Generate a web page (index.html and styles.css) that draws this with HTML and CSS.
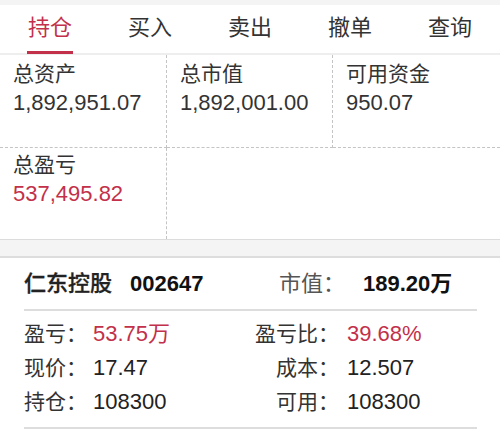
FILE: index.html
```html
<!DOCTYPE html>
<html lang="zh-CN">
<head>
<meta charset="utf-8">
<title>持仓</title>
<link rel="stylesheet" href="styles.css">
</head>
<body>
<div class="topstrip"></div>
<nav class="tabs">
  <div class="tab active">持仓</div>
  <div class="tab">买入</div>
  <div class="tab">卖出</div>
  <div class="tab">撤单</div>
  <div class="tab">查询</div>
</nav>
<section class="summary">
  <div class="cell col1 row1"><div class="label">总资产</div><div class="value">1,892,951.07</div></div>
  <div class="cell col2 row1"><div class="label">总市值</div><div class="value">1,892,001.00</div></div>
  <div class="cell col3 row1"><div class="label">可用资金</div><div class="value">950.07</div></div>
  <div class="cell col1 row2"><div class="label">总盈亏</div><div class="value red">537,495.82</div></div>
  <div class="cell row2 empty"></div>
  <div class="cell row2 empty"></div>
</section>
<div class="band"></div>
<section class="card">
  <div class="card-head">
    <div class="name"><span class="cn">仁东控股</span><span class="code">002647</span></div>
    <div class="mv"><span class="mv-label">市值：</span><span class="mv-value">189.20万</span></div>
  </div>
  <div class="rows">
    <div class="item"><span class="k">盈亏：</span><span class="v red">53.75万</span></div>
    <div class="item right"><span class="k">盈亏比：</span><span class="v red">39.68%</span></div>
    <div class="item"><span class="k">现价：</span><span class="v">17.47</span></div>
    <div class="item right"><span class="k">成本：</span><span class="v">12.507</span></div>
    <div class="item"><span class="k">持仓：</span><span class="v">108300</span></div>
    <div class="item right"><span class="k">可用：</span><span class="v">108300</span></div>
  </div>
</section>
</body>
</html>
```

FILE: styles.css
```css
* { box-sizing: border-box; }
html, body {
  margin: 0;
  padding: 0;
  background: #ffffff;
}
body {
  width: 500px;
  font-family: "Liberation Sans", "Noto Sans CJK SC", sans-serif;
  color: #333333;
}
.red { color: #c3304a; }

.topstrip {
  height: 5px;
  background: #f4f4f4;
}

.tabs {
  display: grid;
  grid-template-columns: repeat(5, 100px);
  height: 50px;
  border-bottom: 2px solid #eeeeee;
}
.tab {
  position: relative;
  text-align: center;
  font-size: 22px;
  line-height: 46px;
  color: #333333;
}
.tab.active { color: #c3304a; }
.tab.active::after {
  content: "";
  position: absolute;
  left: 27px;
  width: 46px;
  bottom: -1px;
  height: 3px;
  background: #c3304a;
}

.summary {
  display: grid;
  grid-template-columns: 167px 166px 1fr;
  grid-template-rows: 93px 91px;
}
.cell {
  padding: 6px 0 0 13px;
}
.col1.row1, .col2.row1, .col1.row2 { border-right: 1px dashed #c4c4c4; }
.row1 { border-bottom: 1px dashed #c4c4c4; }
.row2 { padding-top: 4px; }
.label {
  font-size: 21px;
  line-height: 26px;
  color: #333333;
}
.value {
  margin-top: 3px;
  font-size: 22px;
  line-height: 26px;
  color: #333333;
}
.value.red { color: #c3304a; }

.band {
  height: 19px;
  background: #f4f4f4;
  border-top: 1px solid #dcdcdc;
  border-bottom: 2px solid #dddddd;
}

.card {
  width: 453px;
  margin-left: 24px;
}
.card-head {
  display: flex;
  align-items: center;
  height: 53px;
  padding-top: 1px;
  border-bottom: 2px solid #dddddd;
}
.name {
  width: 255px;
  display: flex;
  gap: 18px;
  font-size: 22px;
  line-height: 30px;
}
.cn { font-weight: 500; color: #222222; -webkit-text-stroke: 0.3px #222222; }
.code { font-weight: bold; color: #111111; }
.mv {
  display: flex;
  gap: 18px;
  font-size: 22px;
  line-height: 30px;
}
.mv-label { color: #555555; }
.mv-value { font-weight: bold; color: #111111; }

.rows {
  display: grid;
  grid-template-columns: 231px 1fr;
  grid-auto-rows: 34px;
  padding: 6px 0 8px;
  border-bottom: 2px solid #dddddd;
}
.item {
  display: flex;
  align-items: center;
  font-size: 22px;
  line-height: 34px;
}
.k {
  font-size: 21px;
  color: #333333;
  width: 69px;
  flex: none;
}
.item.right .k {
  width: 92px;
  padding-right: 8px;
  text-align: right;
}
.v { color: #222222; }
.v.red { color: #c3304a; }
```
